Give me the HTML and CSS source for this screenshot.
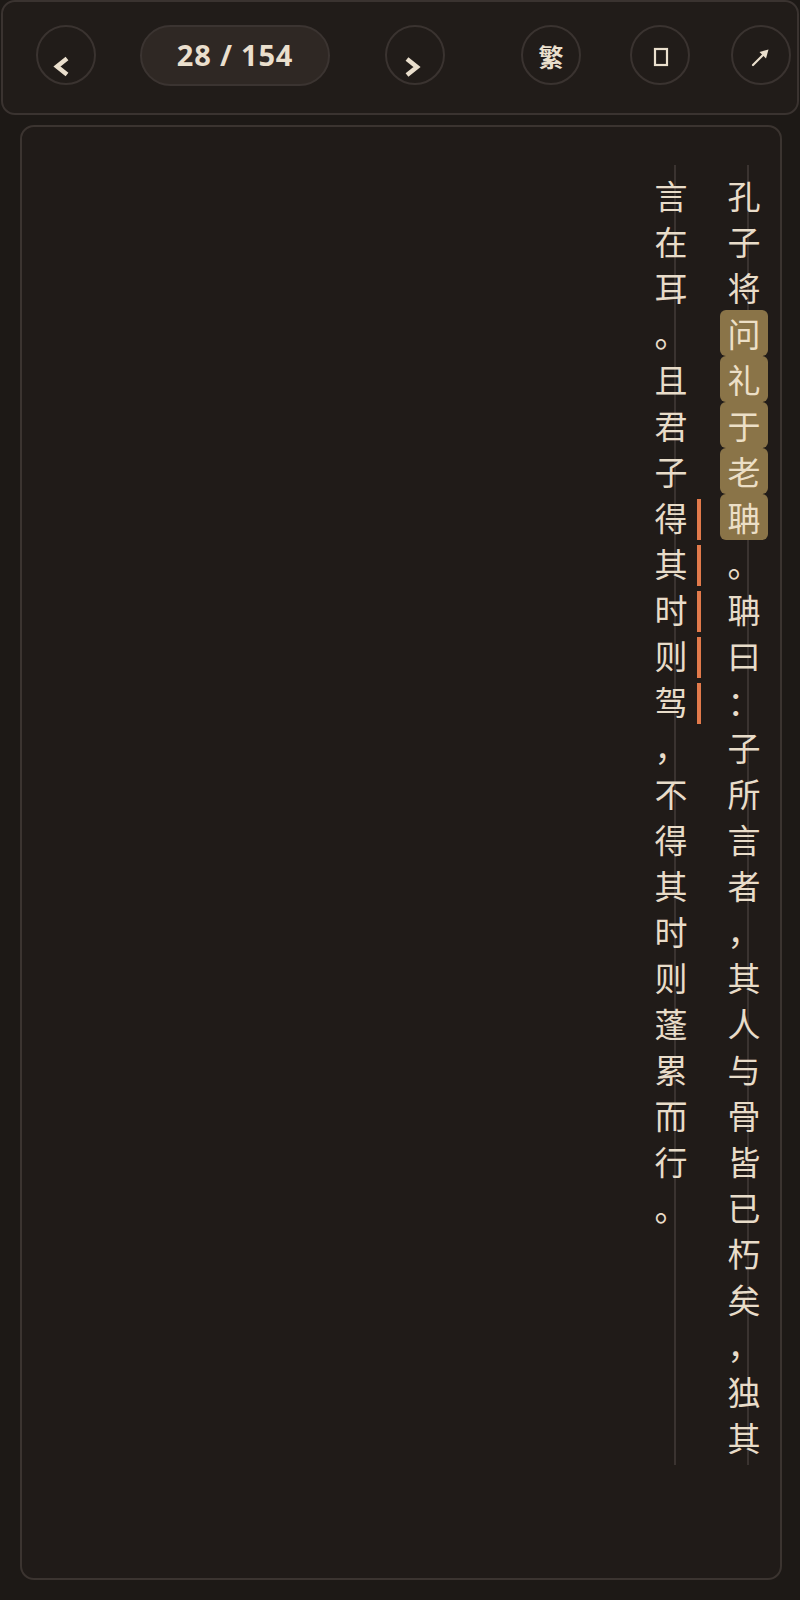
FILE: index.html
```html
<!DOCTYPE html>
<html lang="zh-CN">
<head>
<meta charset="utf-8">
<title>阅读</title>
<link rel="stylesheet" href="styles.css">
</head>
<body>
<header class="topbar">
  <button class="btn prev" aria-label="上一页"><svg width="56" height="56" viewBox="2 2 56 56"><path d="M31 33.5 L21 41.5 L31 49.5" fill="none" stroke="#eadfcd" stroke-width="4.5"/></svg></button>
  <div class="pill">28 / 154</div>
  <button class="btn next" aria-label="下一页"><svg width="56" height="56" viewBox="2 2 56 56"><path d="M22 34 L32 42 L22 50" fill="none" stroke="#eadfcd" stroke-width="4.5"/></svg></button>
  <button class="btn trad"><span class="trad-t">繁</span></button>
  <button class="btn box" aria-label="模式"><svg width="56" height="56" viewBox="2 2 56 56"><rect x="25" y="24" width="12" height="16" fill="none" stroke="#eadfcd" stroke-width="2.2"/></svg></button>
  <button class="btn share" aria-label="分享"><svg width="56" height="56" viewBox="2 2 56 56"><path d="M22 40 L33 29" stroke="#eadfcd" stroke-width="2.2" stroke-linecap="round"/><polygon points="37.5,24.5 28.5,27 35,33.5" fill="#eadfcd"/></svg></button>
</header>
<main class="page">
  <div class="col">
    <span class="ch">孔</span><span class="ch">子</span><span class="ch">将</span><span class="ch hl">问</span><span class="ch hl">礼</span><span class="ch hl">于</span><span class="ch hl">老</span><span class="ch hl">聃</span><span class="ch">。</span><span class="ch">聃</span><span class="ch">曰</span><span class="ch">：</span><span class="ch">子</span><span class="ch">所</span><span class="ch">言</span><span class="ch">者</span><span class="ch">，</span><span class="ch">其</span><span class="ch">人</span><span class="ch">与</span><span class="ch">骨</span><span class="ch">皆</span><span class="ch">已</span><span class="ch">朽</span><span class="ch">矣</span><span class="ch">，</span><span class="ch">独</span><span class="ch">其</span>
  </div>
  <div class="col">
    <span class="ch">言</span><span class="ch">在</span><span class="ch">耳</span><span class="ch">。</span><span class="ch">且</span><span class="ch">君</span><span class="ch">子</span><span class="ch mk">得</span><span class="ch mk">其</span><span class="ch mk">时</span><span class="ch mk">则</span><span class="ch mk">驾</span><span class="ch">，</span><span class="ch">不</span><span class="ch">得</span><span class="ch">其</span><span class="ch">时</span><span class="ch">则</span><span class="ch">蓬</span><span class="ch">累</span><span class="ch">而</span><span class="ch">行</span><span class="ch">。</span>
  </div>
</main>
</body>
</html>
```
FILE: styles.css
```css
* { box-sizing: border-box; }
html, body { margin: 0; padding: 0; background: #1d1916; }
body {
  width: 800px;
  height: 1600px;
  font-family: "Noto Sans", sans-serif;
  color: #eadfcd;
}
.topbar {
  margin: 0 1px;
  height: 115px;
  border: 2px solid #3a3330;
  border-radius: 14px;
  background: #211c19;
  display: flex;
  align-items: flex-start;
  padding: 23px 0 0 33px;
}
.btn {
  flex: none;
  width: 60px;
  height: 60px;
  padding: 0;
  border: 2px solid #3a3330;
  border-radius: 50%;
  background: transparent;
  display: flex;
  align-items: center;
  justify-content: center;
  color: #eadfcd;
}
.btn svg { display: block; }
.pill {
  flex: none;
  margin-left: 44px;
  width: 190px;
  height: 61px;
  border: 2px solid #3b3431;
  border-radius: 31px;
  background: #2f2824;
  display: flex;
  align-items: center;
  justify-content: center;
  font-size: 29px;
  font-weight: 700;
  letter-spacing: 0.8px;
  padding-bottom: 2px;
}
.next { margin-left: 55px; }
.trad { margin-left: 76px; }
.box { margin-left: 49px; }
.share { margin-left: 41px; }
.trad-t {
  font-family: "Noto Sans CJK SC", "Noto Sans CJK TC", sans-serif;
  font-weight: 700;
  font-size: 25px;
  line-height: 1;
  padding-top: 3px;
}
.page {
  margin: 10px 0 0 20px;
  width: 762px;
  height: 1455px;
  border: 2px solid #3b3430;
  border-radius: 14px;
  background: #201b18;
  padding: 38px 12px 0 0;
  display: flex;
  flex-direction: row-reverse;
  gap: 25px;
  align-items: flex-start;
}
.col {
  flex: none;
  width: 48px;
  height: 1300px;
  padding-top: 7px;
  display: flex;
  flex-direction: column;
  background: linear-gradient(#3a3330, #3a3330) no-repeat 27px 0 / 2px 100%;
  font-family: "Noto Sans CJK SC", sans-serif;
  font-size: 33px;
  color: #e8dcc9;
}
.ch {
  display: block;
  width: 48px;
  height: 46px;
  line-height: 46px;
  text-align: center;
  flex: none;
}
.hl {
  background: #8a7448;
  border-radius: 6px;
  color: #ecdfc6;
}
.mk {
  display: grid;
  grid-template-columns: 48px 4px;
  column-gap: 2px;
  justify-items: center;
}
.mk::after {
  content: "";
  width: 4px;
  height: 41px;
  align-self: end;
  background: #e27a4b;
}
```
